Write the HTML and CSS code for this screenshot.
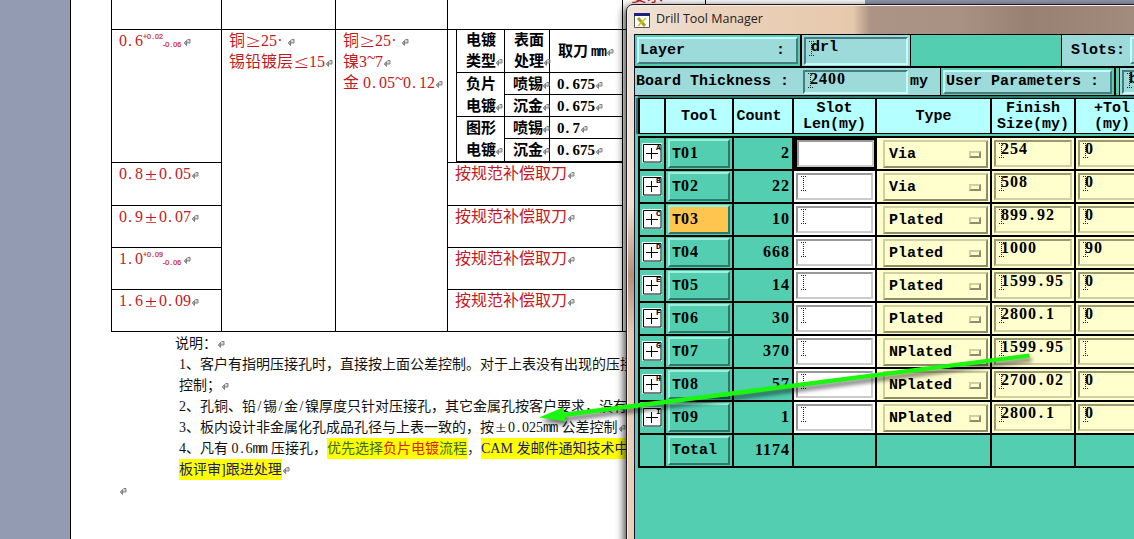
FILE: index.html
```html
<!DOCTYPE html>
<html lang="zh">
<head>
<meta charset="utf-8">
<title>Drill Tool Manager</title>
<link rel="stylesheet" href="styles.css">
</head>
<body>
<svg width="0" height="0" class="defs">
  <symbol id="ret" viewBox="0 0 8 8"><path d="M4.500 1.500h2.500v3.500h-5M3.500 2.500L1.300 5l2.200 2.500z" fill="#858585" fill-opacity=".35" stroke="#808080" stroke-width="1"/></symbol>
  <symbol id="plus" viewBox="0 0 20 20"><path d="M.5 .5h19v19h-19z" fill="#fff" stroke="#e8fff8"/><path d="M1.500 1.500h17.500v17.500h-17.500z" fill="#fff" stroke="#000"/><path d="M4 10.500h12M9.500 5v11" stroke="#000" fill="none"/></symbol>
</svg>
<div class="screen">
  <div class="gutter"></div>
  <main class="page">
    <div class="spec">
      <div class="c top"></div><div class="c top"></div><div class="c top"></div><div class="c top"></div><div class="c top clip"><span>要求</span></div>
      <div class="c c1">0<i>.</i>6<sup>+0<i>.</i>02</sup><sub>-0<i>.</i>06</sub><svg class="r"><use href="#ret"/></svg></div>
      <div class="c tall">铜<b class="cmp">≥</b>25<em>·</em> <svg class="r"><use href="#ret"/></svg><br>锡铅镀层<b class="cmp">≤</b>15<svg class="r"><use href="#ret"/></svg></div>
      <div class="c tall">铜<b class="cmp">≥</b>25<em>·</em> <svg class="r"><use href="#ret"/></svg><br>镍3<u>~</u>7<svg class="r"><use href="#ret"/></svg><br>金 0<i>.</i>05<u>~</u>0<i>.</i>12<svg class="r"><use href="#ret"/></svg></div>
      <div class="c plating">
        <div class="inner">
          <div class="two">电镀<br>类型<svg class="r"><use href="#ret"/></svg></div>
          <div class="two">表面<br>处理<svg class="r"><use href="#ret"/></svg></div>
          <div class="num head">取刀<span class="mm">mm</span><svg class="r"><use href="#ret"/></svg></div>
          <div class="two span2">负片<br>电镀<svg class="r"><use href="#ret"/></svg></div>
          <div class="one">喷锡<svg class="r"><use href="#ret"/></svg></div><div class="num">0<i>.</i>675<svg class="r"><use href="#ret"/></svg></div>
          <div class="one">沉金<svg class="r"><use href="#ret"/></svg></div><div class="num">0<i>.</i>675<svg class="r"><use href="#ret"/></svg></div>
          <div class="two span2">图形<br>电镀<svg class="r"><use href="#ret"/></svg></div>
          <div class="one">喷锡<svg class="r"><use href="#ret"/></svg></div><div class="num">0<i>.</i>7<svg class="r"><use href="#ret"/></svg></div>
          <div class="one">沉金<svg class="r"><use href="#ret"/></svg></div><div class="num">0<i>.</i>675<svg class="r"><use href="#ret"/></svg></div>
        </div>
      </div>
      <div class="c tall"></div>
      <div class="c c1">0<i>.</i>8<b>±</b>0<i>.</i>05<svg class="r"><use href="#ret"/></svg></div><div class="c">按规范补偿取刀<svg class="r"><use href="#ret"/></svg></div>
      <div class="c c1">0<i>.</i>9<b>±</b>0<i>.</i>07<svg class="r"><use href="#ret"/></svg></div><div class="c">按规范补偿取刀<svg class="r"><use href="#ret"/></svg></div>
      <div class="c c1">1<i>.</i>0<sup>+0<i>.</i>09</sup><sub>-0<i>.</i>06</sub><svg class="r"><use href="#ret"/></svg></div><div class="c">按规范补偿取刀<svg class="r"><use href="#ret"/></svg></div>
      <div class="c c1">1<i>.</i>6<b>±</b>0<i>.</i>09<svg class="r"><use href="#ret"/></svg></div><div class="c">按规范补偿取刀<svg class="r"><use href="#ret"/></svg></div>
    </div>
    <div class="notes">
      <p class="lead">说明：<svg class="r"><use href="#ret"/></svg></p>
      <p>1、客户有指明压接孔时，直接按上面公差控制。对于上表没有出现的压接</p>
      <p>控制；<svg class="r"><use href="#ret"/></svg></p>
      <p>2、孔铜、铅<s>/</s>锡<s>/</s>金<s>/</s>镍厚度只针对压接孔，其它金属孔按客户要求，没有</p>
      <p>3、板内设计非金属化孔成品孔径与上表一致的，按<b>±</b>0<i>.</i>025<span class="mm">mm</span> 公差控制<svg class="r"><use href="#ret"/></svg></p>
      <p>4、凡有 0<i>.</i>6<span class="mm">mm</span> 压接孔，<mark class="green">优先选择<span class="red">负片电镀</span>流程</mark><span class="comma">，</span><mark>CAM 发邮件通知技术中</mark></p>
      <p><mark>板评审]跟进处理</mark><svg class="r"><use href="#ret"/></svg></p>
      <p class="end"><svg class="r"><use href="#ret"/></svg></p>
    </div>
  </main>

  <section class="window">
    <header class="title">
      <svg width="16" height="15" viewBox="0 0 16 15"><path d="M.5.5h15v14H.5z" fill="#fff" stroke="#555"/><path d="M0 0h16v3H0z" fill="#20207c"/><path d="M4 5l7 8" stroke="#a7a51c" stroke-width="3"/><path d="M12 5l-8 8" stroke="#c9c72c" stroke-width="1.700"/></svg>
      <span>Drill Tool Manager</span>
    </header>
    <div class="client">
      <div class="bar bar1">
        <div class="slot"><div class="btn aqua layer"><span>Layer</span><span>:</span></div></div>
        <div class="slot flat"><div class="field aqua">drl</div></div>
        <div class="space"></div>
        <div class="slot flat slots"><span>Slots:</span><div class="btn aqua"></div></div>
      </div>
      <div class="bar bar2">
        <div class="slot flat thick"><span>Board Thickness :</span><div class="field aqua"><q>2400</q></div><span>my</span></div>
        <div class="slot user"><div class="btn aqua">User Parameters :</div></div>
        <div class="slot flat last"><div class="field aqua">b</div></div>
      </div>
      <div class="grid heads">
        <div></div><div>Tool</div><div class="cnt">Count</div><div>Slot<br>Len(my)</div><div>Type</div><div>Finish<br>Size(my)</div><div class="tol">+Tol<br>(my)</div>
      </div>
      <div class="grid rows">
        <div class="ic"><svg><use href="#plus"/><text x="14" y="7">A</text></svg></div><div class="t"><div class="btn">T<q>01</q></div></div><div class="n"><q>2</q></div><div class="w focus"><div class="field"></div></div><div class="y ty"><div class="btn">Via<span class="opt"></span></div></div><div class="y"><div class="field"><q>254</q></div></div><div class="y"><div class="field"><q>0</q></div></div>
        <div class="ic"><svg><use href="#plus"/><text x="14" y="7">B</text></svg></div><div class="t"><div class="btn">T<q>02</q></div></div><div class="n"><q>22</q></div><div class="w"><div class="field"></div></div><div class="y ty"><div class="btn">Via<span class="opt"></span></div></div><div class="y"><div class="field"><q>508</q></div></div><div class="y"><div class="field"><q>0</q></div></div>
        <div class="ic"><svg><use href="#plus"/><text x="14" y="7">C</text></svg></div><div class="t"><div class="btn sel">T<q>03</q></div></div><div class="n"><q>10</q></div><div class="w"><div class="field"></div></div><div class="y ty"><div class="btn">Plated<span class="opt"></span></div></div><div class="y"><div class="field"><q>899<i>.</i>92</q></div></div><div class="y"><div class="field"><q>0</q></div></div>
        <div class="ic"><svg><use href="#plus"/><text x="14" y="7">D</text></svg></div><div class="t"><div class="btn">T<q>04</q></div></div><div class="n"><q>668</q></div><div class="w"><div class="field"></div></div><div class="y ty"><div class="btn">Plated<span class="opt"></span></div></div><div class="y"><div class="field"><q>1000</q></div></div><div class="y"><div class="field"><q>90</q></div></div>
        <div class="ic"><svg><use href="#plus"/><text x="14" y="7">E</text></svg></div><div class="t"><div class="btn">T<q>05</q></div></div><div class="n"><q>14</q></div><div class="w"><div class="field"></div></div><div class="y ty"><div class="btn">Plated<span class="opt"></span></div></div><div class="y"><div class="field"><q>1599<i>.</i>95</q></div></div><div class="y"><div class="field"><q>0</q></div></div>
        <div class="ic"><svg><use href="#plus"/><text x="14" y="7">F</text></svg></div><div class="t"><div class="btn">T<q>06</q></div></div><div class="n"><q>30</q></div><div class="w"><div class="field"></div></div><div class="y ty"><div class="btn">Plated<span class="opt"></span></div></div><div class="y"><div class="field"><q>2800<i>.</i>1</q></div></div><div class="y"><div class="field"><q>0</q></div></div>
        <div class="ic"><svg><use href="#plus"/><text x="14" y="7">G</text></svg></div><div class="t"><div class="btn">T<q>07</q></div></div><div class="n"><q>370</q></div><div class="w"><div class="field"></div></div><div class="y ty"><div class="btn">NPlated<span class="opt"></span></div></div><div class="y"><div class="field"><q>1599<i>.</i>95</q></div></div><div class="y"><div class="field"></div></div>
        <div class="ic"><svg><use href="#plus"/><text x="14" y="7">H</text></svg></div><div class="t"><div class="btn">T<q>08</q></div></div><div class="n"><q>57</q></div><div class="w"><div class="field"></div></div><div class="y ty"><div class="btn">NPlated<span class="opt"></span></div></div><div class="y"><div class="field"><q>2700<i>.</i>02</q></div></div><div class="y"><div class="field"><q>0</q></div></div>
        <div class="ic"><svg><use href="#plus"/><text x="14" y="7">I</text></svg></div><div class="t"><div class="btn">T<q>09</q></div></div><div class="n"><q>1</q></div><div class="w"><div class="field"></div></div><div class="y ty"><div class="btn">NPlated<span class="opt"></span></div></div><div class="y"><div class="field"><q>2800<i>.</i>1</q></div></div><div class="y"><div class="field"><q>0</q></div></div>
        <div></div><div class="t"><div class="btn">Total</div></div><div class="n"><q>1174</q></div><div></div><div></div><div></div><div></div>
      </div>
    </div>
  </section>
  <svg class="arrow" width="1134" height="539" viewBox="0 0 1134 539"><path d="M539 417.500L564 407V412.500L1029 353.500L1030 357.500L565 417L566 421.500Z" fill="#1cf50f"/></svg>
</div>
</body>
</html>
```
FILE: styles.css
```css
* { box-sizing: border-box; }
body { margin: 0; }
.defs { position: absolute; }
.screen { position: relative; display: flex; width: 1134px; height: 539px; overflow: hidden; background: linear-gradient(#929bb1 4px, #fff 4px); }
.gutter { width: 71px; flex: none; background: #929bb1; border-right: 1px solid #000; }
i, em, u, s, b { font-style: normal; font-weight: inherit; text-decoration: none; display: inline-block; text-align: center; }
.r { width: 8px; height: 8px; overflow: visible; }

/* Document */
.page { width: 794px; flex: none; padding-left: 40px; overflow: hidden; background: #fff; }
.spec { display: grid; grid-template-columns: 110px 114px 112px 175px 83px; grid-template-rows: 29px 133px 43px 42px 42px 42px; width: 595px; border-left: 1px solid #000; border-bottom: 1px solid #000; font: 16px/21px "Liberation Serif", "Noto Sans CJK SC", serif; color: #c4191f; }
.c { border-right: 1px solid #000; border-top: 1px solid #000; padding: 0 0 0 7px; white-space: nowrap; min-width: 0; }
.c.top { border-top: 0; }
.c1 { grid-column: 1; }
.tall { grid-row: span 5; }
.c i, .c u { width: 8px; text-align: left; }
.c i { padding-left: 1px; }
.c u { transform: translateY(-4px); }
.c b { width: 16px; transform: scale(1.35, 1.1); }
.c b.cmp { transform: scale(1.6, 1.15); }
.c em { width: 6px; }
.clip { line-height: 16px; overflow: hidden; }
.clip span { display: block; margin: -12px 0 0 1px; }
.c sup, .c sub { font: 7px/8px "Liberation Sans", sans-serif; display: inline-block; width: 20px; -webkit-text-stroke: .2px #c4191f; }
.c sup { vertical-align: 7px; }
.c sub { vertical-align: -1px; }
.c sup i, .c sub i { width: 4px; }
.c.plating { padding: 0 0 0 8px; }
.inner { display: grid; grid-template-columns: 48px 45px 73px; grid-template-rows: 43px 22px 22px 22px 23px; border-left: 1px solid #000; color: #000; font-weight: bold; font-size: 15px; width: 166px; }
.inner > div { border-right: 1px solid #000; border-bottom: 1px solid #000; white-space: nowrap; }
.inner .num { border-right: 0; padding-left: 7px; }
.inner .num.head { line-height: 43px; padding-left: 8px; }
.inner .two { padding-left: 9px; }
.inner .one, .inner .num { line-height: 23px; }
.inner .one { padding-left: 8px; }
.inner .two .r, .inner .one .r { margin-left: -1px; }
.inner .span2 { grid-row: span 2; grid-column: 1; line-height: 22px; }
.mm { display: inline-block; font: inherit; font-family: "Liberation Mono", monospace; letter-spacing: -1px; font-size: 14px; }
.num .mm { margin-left: 3px; }
.notes { font: 14px/21px "Liberation Serif", "Noto Sans CJK SC", serif; color: #111; padding: 1px 0 0 68px; }
.notes p { margin: 0; height: 21px; white-space: nowrap; }
.notes .lead { margin-left: -4px; }
.notes .end { margin-left: -60px; }
.notes i, .notes s { width: 7px; }
.notes b { width: 14px; transform: scale(1.35, 1.1); }
.notes .mm { letter-spacing: -1.4px; margin-right: 1px; line-height: 16px; }
mark { display: inline-block; height: 21px; line-height: 21px; vertical-align: top; background: #ff0; color: #1c2070; }
mark.green { color: #3c6b2c; }
.red { color: #dc2010; }
.comma { color: #246; }

/* Tool window */
.window { position: absolute; left: 626px; top: 4px; width: 520px; height: 545px; border: 1px solid #1d1b1b; border-radius: 7px 0 0 0; background: linear-gradient(#eadfd5 0 30px, #f2e0d2 200px, #b58f78 270px, #e6ccb8 330px, #ecd0b9 545px); box-shadow: inset 1px 1px #f8eee6, -2px 2px 9px rgba(0,0,0,.75); padding-left: 7px; }
.title { height: 28px; margin: 1px 0 0 -6px; padding-left: 6px; display: flex; align-items: center; gap: 6px; border-radius: 6px 0 0 0; background: linear-gradient(90deg, #efe4da 0, #ebd2bb 90px, #e6c9ad 225px, #ab9485 242px, #a99284 330px, #988072 400px, #a38d7f 520px); font: 12.500px/26px "Open Sans", sans-serif; color: #222; }
.title svg { flex: none; }
.title span { position: relative; top: -1px; }
.client { height: 511px; background: #53ceb0; border-left: 1px solid #113; color: #000; font: bold 15px/16px "Liberation Mono", monospace; overflow: hidden; }
.client q { quotes: none; font-family: "Liberation Serif", serif; font-size: 16px; line-height: 14px; letter-spacing: 1px; }
.client q::before, .client q::after { content: none; }
.client i { width: 9px; }
.client .btn { border: 2px solid; border-color: #9eeedb #2d7868 #2d7868 #9eeedb; }
.client .btn.aqua { background: #9ddada; border-color: #c6fbfb #477b7d #477b7d #c6fbfb; }
.field { border: 2px solid; border-color: #999 #ccc #ccc #999; position: relative; }
.field.aqua { border-color: #477b7d #c6fbfb #c6fbfb #477b7d; }
.field::before { content: ""; position: absolute; left: 5px; top: 3px; width: 5px; height: 15px; background: repeating-linear-gradient(#222 0 1px, transparent 1px 2px) 2px 0 / 1px 15px no-repeat, linear-gradient(90deg, #222 1px, transparent 1px 4px, #222 4px) 0 0 / 5px 1px no-repeat, linear-gradient(90deg, #222 1px, transparent 1px 4px, #222 4px) 0 14px / 5px 1px no-repeat; }
.bar { display: flex; white-space: nowrap; width: 520px; }
.bar1 { height: 34px; border-top: 1px solid #000; border-bottom: 2px solid #000; }
.bar2 { height: 28px; border-bottom: 1px solid #000; }
.slot { padding: 2px; flex: none; display: flex; align-items: center; }
.flat { background: #9ddada; }
.bar1 .slot:first-child { width: 167px; border-right: 2px solid #000; }
.layer { width: 163px; height: 27px; display: flex; justify-content: space-between; padding: 4px 11px 0 1px; }
.bar1 .slot:nth-child(2) { width: 109px; border-right: 1px solid #000; }
.bar1 .field { width: 105px; height: 28px; padding: 0 0 0 5px; line-height: 17px; }
.bar1 .field::before { left: 3px; top: 2px; }
.space { width: 150px; flex: none; }
.slots { border-left: 1px solid #000; width: 100px; padding-left: 9px; gap: 5px; }
.slots .btn { width: 60px; height: 27px; }
.thick { width: 306px; border-right: 1px solid #000; padding-left: 1px; }
.thick .field { width: 105px; height: 24px; margin: 0 2px 0 14px; padding: 0 0 0 5px; }
.thick .field::before, .last .field::before { left: 3px; top: 1px; }
.user { width: 175px; border-right: 2px solid #000; }
.user .btn { width: 170px; height: 24px; padding: 2px 0 0 1px; }
.last { margin-left: 3px; border-left: 1px solid #000; }
.last .field { width: 50px; height: 24px; padding-left: 5px; }
.grid { display: grid; grid-template-columns: 24px 66px 58px 81px 113px 82px 100px; gap: 2px; background: #000; padding: 2px; margin-left: 3px; width: 540px; }
.grid > div { background: #53ceb0; min-width: 0; white-space: nowrap; }
.heads { margin-top: 2px; padding: 1px 2px; grid-template-rows: 34px; box-shadow: 0 -2px #2d7868, -2px 0 #2d7868; }
.grid.heads > div { background: #b4ffff; display: flex; align-items: center; justify-content: center; text-align: center; padding-top: 1px; }
.grid.heads > .cnt { padding-right: 8px; }
.grid.heads > .tol { padding-right: 28px; }
.rows { margin-top: 2px; grid-auto-rows: 31px; }
.ic svg { width: 20px; height: 20px; margin: 5px 0 0 2px; display: block; overflow: visible; }
.ic text { font: bold 8px "Liberation Mono", monospace; }
.t { padding: 1px 2px; }
.t .btn { height: 29px; padding: 5px 0 0 2px; }
.btn.sel { background: #ffc64f; }
.n { padding: 8px 2px 0 0; text-align: right; }
.grid > .w { background: #fff; padding: 2px; }
.w .field { height: 27px; background: #fff; }
.w .field::before { left: 3px; top: 1px; }
.grid > .focus { background: #000; padding: 2px 1px 2px 3px; }
.focus .field::before { display: none; }
.grid > .y { background: #ffffce; padding: 2px; }
.y .field { height: 27px; border-color: #999973 #cfcfa4 #cfcfa4 #999973; padding: 0 0 0 5px; line-height: 16px; }
.y .field::before { left: 3px; top: 1px; }
.client .ty .btn { margin-left: 4px; height: 28px; width: 105px; display: flex; align-items: center; justify-content: space-between; padding: 1px 5px 0 4px; border-color: #cfcfa4 #8d8d6a #8d8d6a #cfcfa4; }
.opt { width: 12px; height: 7px; margin-bottom: 1px; border: 2px solid; border-color: #cfcfa4 #8d8d6a #8d8d6a #cfcfa4; }
.arrow { position: absolute; left: 0; top: 0; filter: drop-shadow(2px 4px 2px rgba(0,0,0,.55)); }
```
